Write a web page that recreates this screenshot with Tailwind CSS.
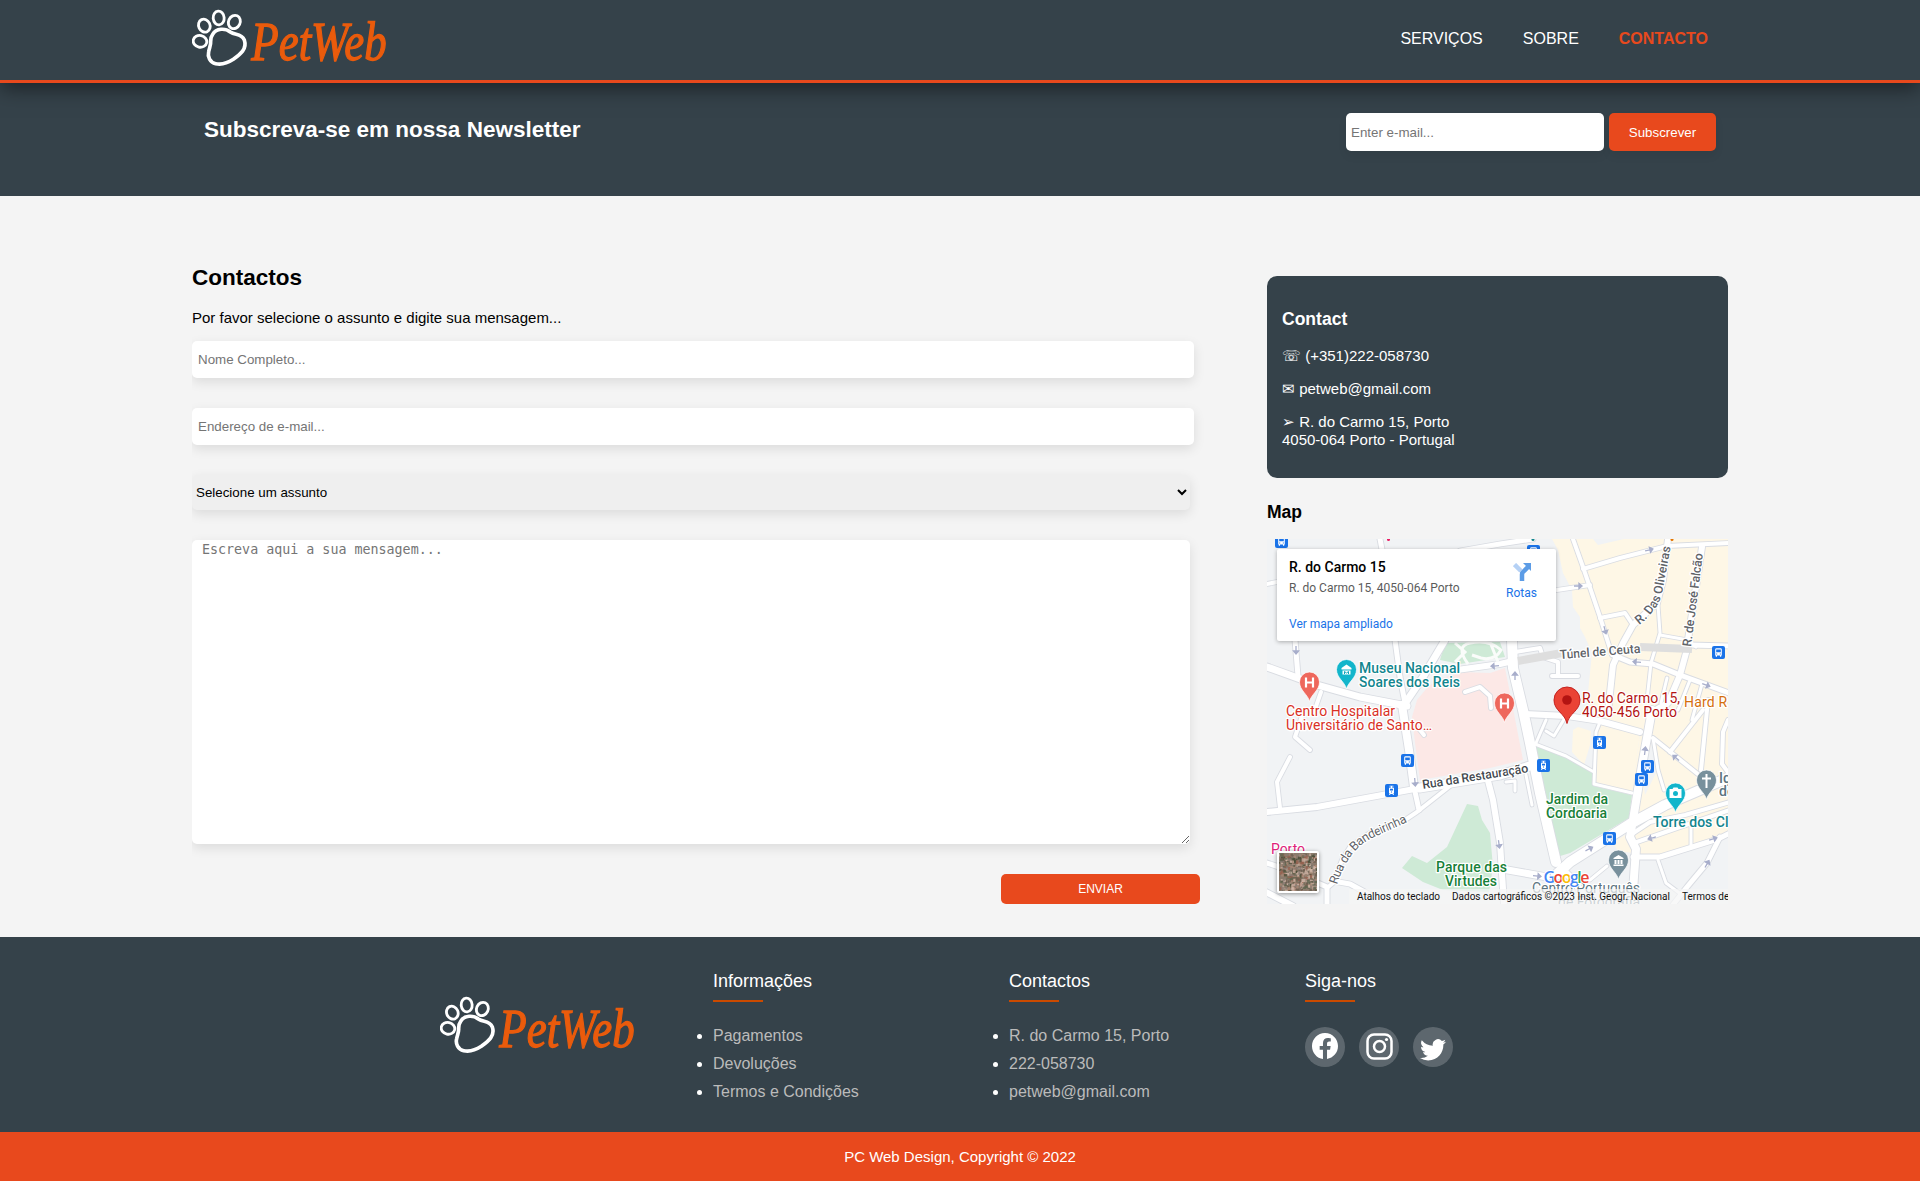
<!DOCTYPE html>
<html lang="pt">
<head>
<meta charset="utf-8">
<title>PetWeb | Contacto</title>
<script src="https://cdn.jsdelivr.net/npm/@tailwindcss/browser@4"></script>
</head>
<body class="bg-[#f4f4f4] font-['Liberation_Sans',Arial,sans-serif] text-[15px] leading-[18px] text-black">

<svg class="hidden">
  <symbol id="logo" viewBox="36 24 600 180">
    <g fill="none" stroke="#fff" stroke-width="8.5">
      <ellipse cx="60" cy="124" rx="20.500" ry="17.500" transform="rotate(12 60 124)"/>
      <ellipse cx="73" cy="77" rx="17" ry="20" transform="rotate(-25 73 77)"/>
      <ellipse cx="116" cy="54" rx="16.500" ry="20.500" transform="rotate(-5 116 54)"/>
      <ellipse cx="163" cy="66" rx="17.500" ry="20.500" transform="rotate(25 163 66)"/>
      <path stroke-width="11" d="M98 103C109 84 136 84 151 96C166 107 183 98 193 120C202 147 181 163 160 178C140 191 120 194 107 191C90 187 82 170 86 155C89 142 93 134 92 124C92 114 94 108 98 103Z"/>
    </g>
    <text x="214" y="179" font-family="Liberation Serif, serif" font-style="italic" font-size="166" fill="#ea5b0c" stroke="#ea5b0c" stroke-width="4" textLength="406" lengthAdjust="spacingAndGlyphs">PetWeb</text>
  </symbol>
  <symbol id="bus" viewBox="0 0 13 13">
    <rect width="13" height="13" rx="2" fill="#1a73e8"/>
    <path fill="#fff" fill-rule="evenodd" d="M3.200 3.500Q3.200 2.300 4.500 2.300H8.500Q9.800 2.300 9.800 3.500V9.500H9.200V10.700H8V9.500H5V10.700H3.800V9.500H3.200ZM4.200 3.500V6.200H8.800V3.500ZM4.200 7.400V8.400H5.200V7.400ZM7.800 7.400V8.400H8.800V7.400Z"/>
  </symbol>
  <symbol id="tram" viewBox="0 0 13 13">
    <rect width="13" height="13" rx="2" fill="#1a73e8"/>
    <path fill="#fff" fill-rule="evenodd" d="M4.500 1.700H8.500V2.500H7V3.500H8Q9 3.600 9 4.500V9.200H8.300L9 11H8L7.500 10H5.500L5 11H4L4.700 9.200H4V4.500Q4 3.600 5 3.500H6V2.500H4.500ZM5 4.700V6.500H8V4.700ZM6 7.500V8.500H7V7.500Z"/>
  </symbol>
  <symbol id="pin" viewBox="-11 -11 22 32" overflow="visible">
    <path stroke="#fff" stroke-width=".7" d="M0 19C-1.500 12-10 8-10-.5A10 10 0 0 1 10-.5C10 8 1.500 12 0 19Z"/>
  </symbol>
  <path id="arrow" d="M-4 0H1M1-2.500L4 0L1 2.500Z" fill="#a8aecb" stroke="#a8aecb" stroke-width="1.300"/>
</svg>

<header class="relative z-10 h-[83px] border-b-3 border-[#e8491d] bg-[#35424a] shadow-[0_5px_20px_rgba(0,0,0,0.5)]">
  <div class="mx-auto flex h-20 w-4/5 items-start justify-between">
    <svg class="mt-2 h-[60px] w-[200px]"><use href="#logo"/></svg>
    <nav class="mt-[30px] mr-5 flex gap-10 text-base leading-[18px] text-white">
      <a>SERVIÇOS</a><a>SOBRE</a><a class="font-bold text-[#e8491d]">CONTACTO</a>
    </nav>
  </div>
</header>

<section class="h-[113px] bg-[#35424a]">
  <div class="mx-auto flex w-4/5 items-start justify-between px-3 pt-[30px]">
    <h1 class="mt-px text-[22.500px] leading-8 font-bold text-white">Subscreva-se em nossa Newsletter</h1>
    <form class="flex gap-[5px] text-[13.333px]">
      <input class="h-[38px] w-[258px] rounded-[5px] bg-white pt-px pl-[5px] shadow-[0_5px_10px_rgba(0,0,0,0.06)] placeholder:text-[#757575]" placeholder="Enter e-mail...">
      <button type="button" class="h-[38px] w-[107px] rounded-[5px] bg-[#e8491d] pt-px text-white shadow-[0_5px_10px_rgba(0,0,0,0.06)]">Subscrever</button>
    </form>
  </div>
</section>

<main class="mx-auto flex h-[741px] w-4/5 justify-between">
  <section class="w-[1020px] pt-[67px]">
    <h2 class="text-[22.500px] leading-[30px] font-bold">Contactos</h2>
    <p class="mt-4">Por favor selecione o assunto e digite sua mensagem...</p>
    <form class="flex flex-col overflow-hidden pt-[14px] pb-5 text-[13.333px]">
      <input class="h-[37px] w-[1002px] rounded-[5px] bg-white px-1.5 shadow-[0_4px_12px_rgba(0,0,0,0.1)] placeholder:text-[#757575]" placeholder="Nome Completo...">
      <input class="mt-[30px] h-[37px] w-[1002px] rounded-[5px] bg-white px-1.5 shadow-[0_4px_12px_rgba(0,0,0,0.1)] placeholder:text-[#757575]" placeholder="Endereço de e-mail...">
      <select class="mt-[30px] h-[35px] w-[998px] rounded-[5px] bg-[#efefef] shadow-[0_4px_12px_rgba(0,0,0,0.1)]"><option>Selecione um assunto</option></select>
      <textarea class="mt-[30px] h-[304px] w-[998px] resize rounded-[5px] bg-white px-[10px] pt-0.5 font-['DejaVu_Sans_Mono',monospace] text-[13.333px] leading-4 shadow-[0_4px_12px_rgba(0,0,0,0.1)] placeholder:text-[#757575]" placeholder="Escreva aqui a sua mensagem..."></textarea>
      <button type="button" class="mt-[30px] ml-[809px] h-[30px] w-[199px] rounded-[5px] bg-[#e8491d] text-[12px] text-white">ENVIAR</button>
    </form>
  </section>

  <aside class="w-[461px] pt-20">
    <div class="h-[202px] rounded-[10px] bg-[#35424a] px-[15px] pt-[33px] text-white">
      <h3 class="text-[17.550px] leading-5 font-bold">Contact</h3>
      <p class="mt-[18px]">☏ (+351)222-058730</p>
      <p class="mt-[15px]">✉ petweb@gmail.com</p>
      <p class="mt-[15px]">➢ R. do Carmo 15, Porto<br>4050-064 Porto - Portugal</p>
    </div>
    <h3 class="mt-6 text-[17.550px] leading-5 font-bold">Map</h3>

    <div class="relative mt-[17px] h-[365px] w-[461px] overflow-hidden font-['Roboto',sans-serif]">
      <svg class="block h-[365px] w-[461px]" viewBox="1267 539 461 365">
        <rect x="1267" y="539" width="461" height="365" fill="#f1f3f5"/>
        <!-- built-up areas -->
        <g fill="#fef7e6">
          <path d="M1552 539L1558 550L1563 573L1572 590L1573 607L1580 617L1580 628L1585 637L1592 653L1588 693L1590 715L1600 718L1597 727L1640 733L1632 793L1629 820L1631 857L1660 857L1728 835V539Z"/>
          <path d="M1597 727L1595 785L1632 793L1640 733Z"/>
          <path d="M1573 730L1578 727L1591 731L1590 745L1584 765L1572 752Z"/>
          <path d="M1613 843L1631 831L1633 853L1618 851Z"/>
        </g>
        <path d="M1593 539H1624L1598 545ZM1653 738L1660 765L1645 795L1642 775ZM1728 848V904H1632L1633 858L1660 858L1718 840Z" fill="#f1f3f5"/>
        <path d="M1412 717L1417 700L1427 688L1437 680L1460 672L1490 673L1505 668L1510 693L1523 760L1490 768L1420 780L1415 743Z" fill="#fce8e6"/>
        <g fill="#ceead6">
          <path d="M1535 745L1566 757L1593 773L1594 786L1632 795L1629 818L1570 853L1557 857L1550 835Z"/>
          <path d="M1445 643L1500 642L1505 657L1460 664L1440 660Z"/>
          <path d="M1467 804L1478 806L1482 820L1490 833L1493 867L1489 892L1443 890L1423 882L1402 868L1412 856L1427 863L1447 847Z"/>
        </g>
        <g id="roads" fill="none" stroke-linejoin="round" stroke-linecap="round"></g>
        <path d="M1455 662L1465 652L1455 643M1468 664Q1455 646 1470 643Q1489 639 1501 650Q1495 661 1481 658L1472 655M1490 642L1498 662" fill="none" stroke="#fafcfa" stroke-width="3"/>
        <path d="M1518 661L1562 653M1640 647L1692 649" stroke="#dedede" stroke-width="8"/>
        <g>
          <use href="#arrow" transform="translate(1296 650) rotate(90)"/>
          <use href="#arrow" transform="translate(1495 666) rotate(176)"/>
          <use href="#arrow" transform="translate(1515 676) rotate(-90)"/>
          <use href="#arrow" transform="translate(1649 550) rotate(-13)"/>
          <use href="#arrow" transform="translate(1578 586)"/>
          <use href="#arrow" transform="translate(1605 630) rotate(75)"/>
          <use href="#arrow" transform="translate(1637 662) rotate(185)"/>
          <use href="#arrow" transform="translate(1706 685) rotate(20)"/>
          <use href="#arrow" transform="translate(1645 751) rotate(-83)"/>
          <use href="#arrow" transform="translate(1676 758) rotate(-140)"/>
          <use href="#arrow" transform="translate(1652 838) rotate(165)"/>
          <use href="#arrow" transform="translate(1713 839) rotate(-17)"/>
          <use href="#arrow" transform="translate(1707 864) rotate(-60)"/>
          <use href="#arrow" transform="translate(1589 849) rotate(-28)"/>
          <use href="#arrow" transform="translate(1537 876) rotate(5)"/>
          <use href="#arrow" transform="translate(1499 844) rotate(82)"/>
          <use href="#arrow" transform="translate(1415 782) rotate(85)"/>
        </g>
        <!-- transit stops -->
        <use href="#bus" x="1275" y="535" width="13" height="13"/>
        <use href="#bus" x="1527" y="545" width="13" height="13"/>
        <use href="#bus" x="1712" y="646" width="13" height="13"/>
        <use href="#bus" x="1401" y="754" width="13" height="13"/>
        <use href="#tram" x="1385" y="784" width="13" height="13"/>
        <use href="#tram" x="1593" y="736" width="13" height="13"/>
        <use href="#tram" x="1537" y="759" width="13" height="13"/>
        <use href="#bus" x="1641" y="760" width="13" height="13"/>
        <use href="#bus" x="1635" y="773" width="13" height="13"/>
        <use href="#bus" x="1603" y="832" width="13" height="13"/>
        <circle cx="1388.500" cy="539.500" r="1.500" fill="#e91e63"/>
        <circle cx="1533" cy="539.500" r="1.500" fill="#12858d"/>
        <circle cx="1672" cy="539.500" r="1.500" fill="#e37400"/>
        <!-- labels along streets -->
        <path id="s1" d="M1639 625Q1661 608 1663 588L1672 540" fill="none"/>
        <path id="s2" d="M1691 647L1704 545" fill="none"/>
        <path id="s3" d="M1337 885Q1348 849 1374 837L1412 820" fill="none"/>
        <g stroke="#fff" stroke-width="2.500" stroke-linejoin="round" paint-order="stroke" font-weight="500" font-size="14">
          <g fill="#5f6368" font-size="12.500">
            <text><textPath href="#s1" textLength="87" lengthAdjust="spacingAndGlyphs">R. Das Oliveiras</textPath></text>
            <text><textPath href="#s2" textLength="94">R. de José Falcão</textPath></text>
            <text font-weight="400"><textPath href="#s3" textLength="99">Rua da Bandeirinha</textPath></text>
            <text x="1560" y="659" textLength="81" transform="rotate(-4.500 1560 659)">Túnel de Ceuta</text>
            <text x="1423" y="789" textLength="107" fill="#444950" transform="rotate(-9 1423 789)">Rua da Restauração</text>
          </g>
          <g fill="#12858d"><text x="1359" y="673" textLength="101">Museu Nacional</text><text x="1359" y="687" textLength="101">Soares dos Reis</text>
            <text x="1653" y="827">Torre dos Clérigos</text></g>
          <g font-weight="400">
            <g fill="#d93025"><text x="1286" y="716" textLength="109">Centro Hospitalar</text><text x="1286" y="730" textLength="146">Universitário de Santo…</text></g>
            <g fill="#b31412"><text x="1582" y="703" textLength="98">R. do Carmo 15,</text><text x="1582" y="717" textLength="95">4050-456 Porto</text></g>
            <text x="1684" y="707" fill="#d56e0c" letter-spacing=".2">Hard Rock</text>
            <text x="1271" y="854" fill="#e0217a" textLength="34">Porto</text>
            <g fill="#5c7480"><text x="1532" y="893" textLength="108">Centro Português</text><text x="1558" y="907" textLength="82">de Fotografia</text></g>
          </g>
          <g fill="#188038"><text x="1546" y="804" textLength="62">Jardim da</text><text x="1546" y="818" textLength="61">Cordoaria</text>
            <text x="1436" y="872" textLength="71">Parque das</text><text x="1445" y="886" textLength="52">Virtudes</text></g>
          <g fill="#5c7480"><text x="1719" y="783">Igr</text><text x="1719" y="796">do</text></g>
        </g>
        <!-- place pins -->
        <use href="#pin" x="1335.500" y="659" width="22" height="32" fill="#12b5cb"/>
        <path d="M1341.500 668L1346.500 664.500L1351.500 668V669.500H1341.500ZM1342.500 670.500H1350.500V674.500H1342.500Z" fill="#fff"/><path d="M1344.500 674V671.500L1346.500 673L1348.500 671.500V674" fill="none" stroke="#12a5bb"/>
        <use href="#pin" x="1298.500" y="671.500" width="22" height="32" fill="#ee675c"/><path d="M1306 677.500V687.500M1313 677.500V687.500M1306 682.500H1313" stroke="#fff" stroke-width="2.200"/>
        <use href="#pin" x="1493.500" y="692.500" width="22" height="32" fill="#ee675c"/><path d="M1501 698.500V708.500M1508 698.500V708.500M1501 703.500H1508" stroke="#fff" stroke-width="2.200"/>
        <path d="M1567 723.500C1565 713 1554 711 1554 700A13 13 0 0 1 1580 700C1580 711 1569 713 1567 723.500Z" fill="#ea4335" stroke="#c5221f"/><circle cx="1567" cy="700" r="4.800" fill="#b31412"/>
        <use href="#pin" x="1695.500" y="769.500" width="22" height="32" fill="#78909c"/><path d="M1706.500 774V788M1702 778.500H1711" stroke="#fff" stroke-width="2"/>
        <use href="#pin" x="1664.500" y="782.500" width="22" height="32" fill="#12b5cb"/><path fill="#fff" fill-rule="evenodd" d="M1669.500 789H1672.500L1673.500 787.500H1677.500L1678.500 789H1681.500V798H1669.500ZM1675.500 791A2.500 2.500 0 1 0 1675.500 796A2.500 2.500 0 1 0 1675.500 791Z"/>
        <use href="#pin" x="1607.500" y="849.500" width="22" height="32" fill="#78909c"/><path d="M1613.500 858L1618.500 855L1623.500 858V859H1613.500ZM1614.500 860H1616.500V864H1614.500ZM1617.500 860H1619.500V864H1617.500ZM1620.500 860H1622.500V864H1620.500ZM1613.500 864.500H1623.500V866H1613.500Z" fill="#fff"/>
        <!-- attribution -->
        <rect x="1349" y="889" width="379" height="15" fill="#f5f5f5" fill-opacity=".72"/>
        <text x="1543.500" y="882.500" font-family="Open Sans, sans-serif" font-size="16" font-weight="600" textLength="46" stroke="#fff" stroke-width="2" paint-order="stroke"><tspan fill="#4285f4">G</tspan><tspan fill="#ea4335">o</tspan><tspan fill="#fbbc04">o</tspan><tspan fill="#4285f4">g</tspan><tspan fill="#34a853">l</tspan><tspan fill="#ea4335">e</tspan></text>
        <g font-size="10" fill="#111"><text x="1357" y="899.500" textLength="83">Atalhos do teclado</text><text x="1452" y="899.500" textLength="218">Dados cartográficos ©2023 Inst. Geogr. Nacional</text><text x="1682" y="899.500">Termos de Utilização</text></g>
      </svg>

      <div class="absolute top-2.5 left-2.5 flex h-[92px] w-[279px] justify-between rounded-xs bg-white py-[9px] pr-[19px] pl-3 text-xs leading-[15px] shadow-[0_1px_4px_rgba(0,0,0,0.3)]">
        <div class="flex flex-col">
          <b class="text-sm leading-[18px] font-medium">R. do Carmo 15</b>
          <span class="mt-[5px] text-[#5b5b5b]">R. do Carmo 15, 4050-064 Porto</span>
          <a class="mt-[21px] text-[#1a73e8]">Ver mapa ampliado</a>
        </div>
        <div class="flex flex-col items-center text-[#1a73e8]">
          <svg class="mt-[5px] h-[18px] w-[18px]" viewBox="0 0 18 18"><path d="M1.500 1.500L8 8" stroke="#b5d1f5" stroke-width="4.500"/><path d="M9 18V11.500Q9 9.500 11 8L15 4" fill="none" stroke="#5c9ce6" stroke-width="4.500"/><path d="M10 0H18V8Z" fill="#5c9ce6"/></svg>
          <span class="mt-[5px]">Rotas</span>
        </div>
      </div>
      <svg id="sat" class="absolute top-[312px] left-2.5 h-[42px] w-[42px] rounded-xs border-2 border-white bg-[#8a7b6d] shadow-[0_1px_4px_rgba(0,0,0,0.4)]" viewBox="0 0 38 38"></svg>
    </div>
  </aside>
</main>

<footer class="h-[195px] bg-[#35424a] text-white">
  <div class="ml-[440px] flex">
    <svg class="mt-[58px] mr-[73px] h-[60px] w-[200px]"><use href="#logo"/></svg>
    <section class="w-[296px] pt-8">
      <h4 class="text-lg leading-6">Informações</h4>
      <div class="mt-[7px] h-0.5 w-[50px] bg-[#cb4a00]"></div>
      <ul class="mt-5 list-disc text-base leading-7 marker:text-white"><li><a class="text-[#bbb]">Pagamentos</a></li><li><a class="text-[#bbb]">Devoluções</a></li><li><a class="text-[#bbb]">Termos e Condições</a></li></ul>
    </section>
    <section class="w-[296px] pt-8">
      <h4 class="text-lg leading-6">Contactos</h4>
      <div class="mt-[7px] h-0.5 w-[50px] bg-[#cb4a00]"></div>
      <ul class="mt-5 list-disc text-base leading-7 marker:text-white"><li><a class="text-[#bbb]">R. do Carmo 15, Porto</a></li><li><a class="text-[#bbb]">222-058730</a></li><li><a class="text-[#bbb]">petweb@gmail.com</a></li></ul>
    </section>
    <section class="pt-8">
      <h4 class="text-lg leading-6">Siga-nos</h4>
      <div class="mt-[7px] h-0.5 w-[50px] bg-[#cb4a00]"></div>
      <div class="mt-[25px] flex gap-3.5">
        <a class="h-10 w-10 rounded-full bg-white/20"><svg class="mt-1.5 ml-[7px] h-[26px] w-[26px]" viewBox="0 0 16 16" fill="#fff"><path d="M16 8.049c0-4.446-3.582-8.050-8-8.050C3.580 0-.002 3.603-.002 8.050c0 4.017 2.926 7.347 6.750 7.951v-5.625h-2.030V8.050H6.750V6.275c0-2.017 1.195-3.131 3.022-3.131.876 0 1.791.157 1.791.157v1.980h-1.009c-.993 0-1.303.621-1.303 1.258v1.510h2.218l-.354 2.326H9.250V16c3.824-.604 6.750-3.934 6.750-7.951z"/></svg></a>
        <a class="h-10 w-10 rounded-full bg-white/20"><svg class="mt-1.5 ml-[7px] h-[27px] w-[27px]" viewBox="0 0 27 27" fill="none" stroke="#fff" stroke-width="2.500"><rect x="1.500" y="1.500" width="24" height="24" rx="6.500"/><circle cx="13.500" cy="13.500" r="5.500"/><circle cx="20.500" cy="6.500" r="1.600" fill="#fff" stroke="none"/></svg></a>
        <a class="h-10 w-10 rounded-full bg-white/20"><svg class="mt-[9px] ml-[7px] h-[26px] w-[26px]" viewBox="0 0 16 16" fill="#fff"><path d="M5.026 15c6.038 0 9.341-5.003 9.341-9.334 0-.140 0-.282-.006-.422A6.685 6.685 0 0 0 16 3.542a6.658 6.658 0 0 1-1.889.518 3.301 3.301 0 0 0 1.447-1.817 6.533 6.533 0 0 1-2.087.793A3.286 3.286 0 0 0 7.875 6.030a9.325 9.325 0 0 1-6.767-3.429 3.289 3.289 0 0 0 1.018 4.382A3.323 3.323 0 0 1 .640 6.575v.045a3.288 3.288 0 0 0 2.632 3.218 3.203 3.203 0 0 1-.865.115 3.230 3.230 0 0 1-.614-.057 3.283 3.283 0 0 0 3.067 2.277A6.588 6.588 0 0 1 .780 13.580a6.320 6.320 0 0 1-.780-.045A9.344 9.344 0 0 0 5.026 15z"/></svg></a>
      </div>
    </section>
  </div>
</footer>
<div class="flex h-[49px] items-center justify-center bg-[#e8491d] text-white">PC Web Design, Copyright © 2022</div>

<script>
// Streets as [width, path]; all casings are drawn first so that junctions stay open.
const streets = [
  [4,'M1267 584L1277 582'],[5,'M1380 539L1384 560'],[5,'M1460 551L1500 544L1533 539'],
  [5,'M1295 640L1298 676'],[7,'M1267 667L1317 685L1360 697L1407 706'],[4,'M1321 692L1314 712'],
  [4,'M1303 713L1295 737L1310 750'],[4,'M1290 757L1277 782L1280 808'],
  [5,'M1395 640L1400 677L1405 703'],[7,'M1445 640L1423 677L1404 705'],
  [6,'M1457 670L1500 664L1513 661'],[8,'M1402 705L1409 750L1414 787'],[5,'M1414 787L1419 810'],
  [6,'M1267 812L1317 807L1393 793L1420 788'],[9,'M1420 788L1500 775L1533 765'],
  [4,'M1450 786L1417 812L1405 820L1370 833L1350 847L1342 860L1333 883L1327 888'],
  [5,'M1267 863L1285 869L1327 887V904'],[5,'M1333 881L1350 884L1372 896'],[6,'M1262 890L1293 906'],
  [4,'M1465 692L1480 687L1490 696L1491 708'],[4,'M1420 730L1424 735'],
  [4,'M1515 652L1540 648L1543 657L1558 662V676M1552 676H1578'],
  [10,'M1512 640L1513 668L1523 710L1530 743L1540 793L1556 862'],
  [6,'M1487 777L1493 800L1500 843L1504 904'],[3,'M1506 782L1515 781V791'],[3,'M1526 775L1532 805'],
  [7,'M1502 869L1547 877'],[10,'M1556 875L1570 862L1630 824L1665 805L1700 790L1732 776'],
  [7,'M1561 868L1575 882L1583 895'],[3,'M1590 880L1607 866'],
  [8,'M1652 710L1640 777L1633 820L1630 837L1636 849L1632 905'],
  [6,'M1525 714L1567 716L1600 721L1640 732'],[3,'M1536 743L1546 720M1546 731L1554 736L1566 716'],
  [3,'M1535 744L1566 756L1594 772'],[3,'M1600 722L1596 732L1594 784L1632 793'],
  [4,'M1573 539L1583 567L1600 617L1612 655'],[4,'M1583 569L1620 558L1667 546L1730 543'],[4,'M1557 590L1590 585'],
  [4,'M1600 618L1625 613L1633 625'],[6,'M1668 539L1663 580L1657 603L1633 625L1623 643L1613 665L1608 712'],
  [5,'M1613 655L1630 662L1653 664L1680 675L1732 694'],[3,'M1658 605L1660 633L1651 663L1647 700'],
  [3,'M1660 635L1688 640L1696 647'],[5,'M1690 645L1730 646'],
  [6,'M1702 547L1686 653L1680 675L1668 703L1652 712'],[3,'M1667 678L1661 703M1690 680L1678 710M1702 684L1692 720'],
  [4,'M1703 710L1670 752'],[4,'M1708 700L1701 770'],[4,'M1728 720L1723 732L1722 764L1728 772'],
  [4,'M1653 738L1704 779'],[3,'M1653 738L1658 770L1664 790'],
  [4,'M1632 834L1650 822L1685 815L1730 802'],[4,'M1634 843L1677 828L1730 810'],[5,'M1633 857L1660 857L1718 839L1730 833'],
  [5,'M1720 837L1707 863L1687 887L1672 906'],[3,'M1658 860L1666 883L1682 895'],[3,'M1691 824V845']
];
const ns = 'http://www.w3.org/2000/svg';
const roads = document.getElementById('roads');
for (const casing of [true, false]) {
  for (const [w, d] of streets) {
    const p = document.createElementNS(ns, 'path');
    p.setAttribute('d', d);
    p.setAttribute('stroke', casing ? '#d9dce2' : '#ffffff');
    p.setAttribute('stroke-width', casing ? w + 1.8 : w);
    roads.appendChild(p);
  }
}
// Rooftop mosaic for the satellite thumbnail
const tones = ['#a98876','#5f6550','#c7aa9b','#484c36','#8d8078','#d0b5a6','#6b5c4e','#97624f'];
const sat = document.getElementById('sat');
let seed = 11;
const rnd = () => (seed = (seed * 16807) % 2147483647) / 2147483647;
for (let i = 0; i < 420; i++) {
  const r = document.createElementNS(ns, 'rect');
  r.setAttribute('x', rnd() * 38); r.setAttribute('y', rnd() * 38);
  r.setAttribute('width', 1 + rnd() * 3); r.setAttribute('height', 1 + rnd() * 3);
  r.setAttribute('fill', tones[Math.floor(rnd() * 8)]); r.setAttribute('fill-opacity', '.8');
  sat.appendChild(r);
}
</script>
</body>
</html>
